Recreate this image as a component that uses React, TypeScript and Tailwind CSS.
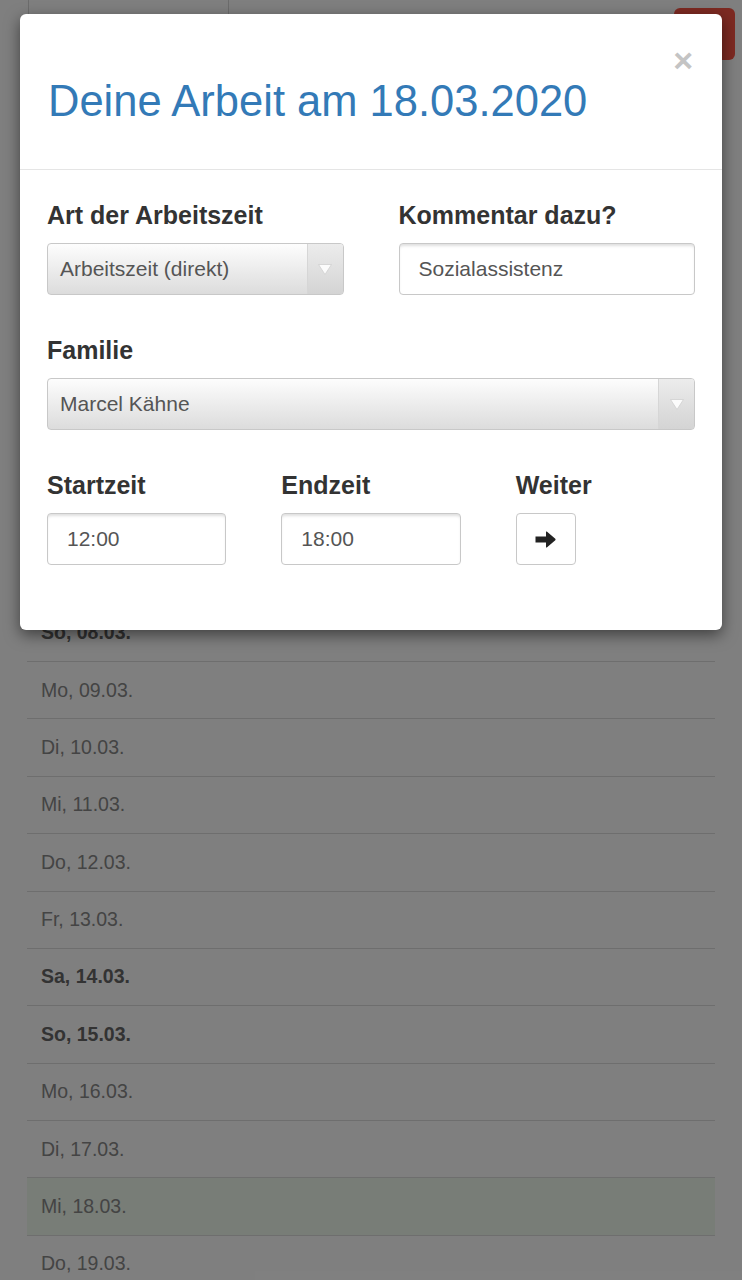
import React from "react";

const rows: { label: string; bold?: boolean; active?: boolean }[] = [
  { label: "Di, 03.03." },
  { label: "Mi, 04.03." },
  { label: "Do, 05.03." },
  { label: "Fr, 06.03." },
  { label: "Sa, 07.03.", bold: true },
  { label: "So, 08.03.", bold: true },
  { label: "Mo, 09.03." },
  { label: "Di, 10.03." },
  { label: "Mi, 11.03." },
  { label: "Do, 12.03." },
  { label: "Fr, 13.03." },
  { label: "Sa, 14.03.", bold: true },
  { label: "So, 15.03.", bold: true },
  { label: "Mo, 16.03." },
  { label: "Di, 17.03." },
  { label: "Mi, 18.03.", active: true },
  { label: "Do, 19.03." },
];

function Caret() {
  return (
    <svg width="16" height="13" viewBox="0 0 16 13">
      <path d="M1.5 1.5 H14.5 L8 11.5 Z" fill="#fbfbfb" stroke="#cfcfcf" strokeWidth="0.8" strokeLinejoin="round" />
    </svg>
  );
}

function Select({ value }: { value: string }) {
  return (
    <div className="flex h-[52px] w-full overflow-hidden rounded-[4px] border border-[#c8c8c8] bg-gradient-to-b from-[#fdfdfd] to-[#dcdcdc]">
      <div className="flex flex-1 items-center pl-[12px] text-[21px] text-[#555]">{value}</div>
      <div className="flex w-[36px] items-center justify-center border-l border-[#d6d6d6] bg-gradient-to-b from-[#ececec] to-[#d4d4d4]">
        <Caret />
      </div>
    </div>
  );
}

function TextInput({ value }: { value: string }) {
  return (
    <div className="flex h-[52px] w-full items-center rounded-[4px] border border-[#c8c8c8] bg-white pl-[19px] text-[21px] text-[#555] shadow-[inset_0_3px_3px_-1px_rgba(0,0,0,0.13)]">
      {value}
    </div>
  );
}

function Label({ children }: { children: React.ReactNode }) {
  return <div className="mb-[14px] h-[28px] text-[25px] font-bold leading-[28px] text-[#333]">{children}</div>;
}

export default function App() {
  return (
    <div className="relative h-[1280px] w-[742px] overflow-hidden bg-white" style={{ fontFamily: '"Liberation Sans", Arial, Helvetica, sans-serif' }}>
      {/* background page */}
      <div className="flex h-[317.6px] items-start">
        <div className="ml-[28px] h-[40px] w-[201px] border-x border-b border-[#d8d8d8]" />
        <div className="ml-auto mr-[7px] mt-[8px] h-[52px] w-[61px] rounded-[6px] bg-[#fb5444]" />
      </div>
      <div className="mx-[27px]">
        {rows.map((r) => (
          <div
            key={r.label}
            className={
              "flex h-[57.4px] items-center border-b border-[#dcdcdc] pl-[14px] text-[19.5px] " +
              (r.active ? "bg-[#f0faee] " : "") +
              (r.bold ? "font-bold text-[#666]" : "text-[#888]")
            }
          >
            {r.label}
          </div>
        ))}
      </div>

      {/* backdrop */}
      <div className="absolute inset-0 bg-black/50" />

      {/* modal */}
      <div className="absolute left-[20px] top-[14px] h-[616px] w-[702px] rounded-[6px] bg-white shadow-[0_5px_15px_rgba(0,0,0,0.5)]">
        <div className="relative h-[156px] border-b border-[#e5e5e5] pl-[28px] pt-[63px]">
          <div className="text-[43.5px] leading-[48px] text-[#337ab7]">Deine Arbeit am 18.03.2020</div>
          <div className="absolute right-[29px] top-[29px] text-[34px] font-bold leading-[34px] text-[#c4c4c4]">×</div>
        </div>
        <div className="px-[27px] pt-[31px]">
          <div className="mb-[41px] grid grid-cols-2 gap-x-[55px]">
            <div>
              <Label>Art der Arbeitszeit</Label>
              <Select value="Arbeitszeit (direkt)" />
            </div>
            <div>
              <Label>Kommentar dazu?</Label>
              <TextInput value="Sozialassistenz" />
            </div>
          </div>
          <div className="mb-[41px]">
            <Label>Familie</Label>
            <Select value="Marcel Kähne" />
          </div>
          <div className="grid grid-cols-3 gap-x-[55px]">
            <div>
              <Label>Startzeit</Label>
              <TextInput value="12:00" />
            </div>
            <div>
              <Label>Endzeit</Label>
              <TextInput value="18:00" />
            </div>
            <div>
              <Label>Weiter</Label>
              <button className="flex h-[52px] w-[60px] items-center justify-center rounded-[4px] border border-[#c8c8c8] bg-white">
                <svg width="21" height="17" viewBox="0 0 21 17">
                  <path d="M0.5 5.6 H11 V0.8 Q11.2 0.3 11.8 0.6 L20.3 7.8 Q20.9 8.5 20.3 9.2 L11.8 16.4 Q11.2 16.7 11 16.2 V11.4 H0.5 Z" fill="#222" />
                </svg>
              </button>
            </div>
          </div>
        </div>
      </div>
    </div>
  );
}
